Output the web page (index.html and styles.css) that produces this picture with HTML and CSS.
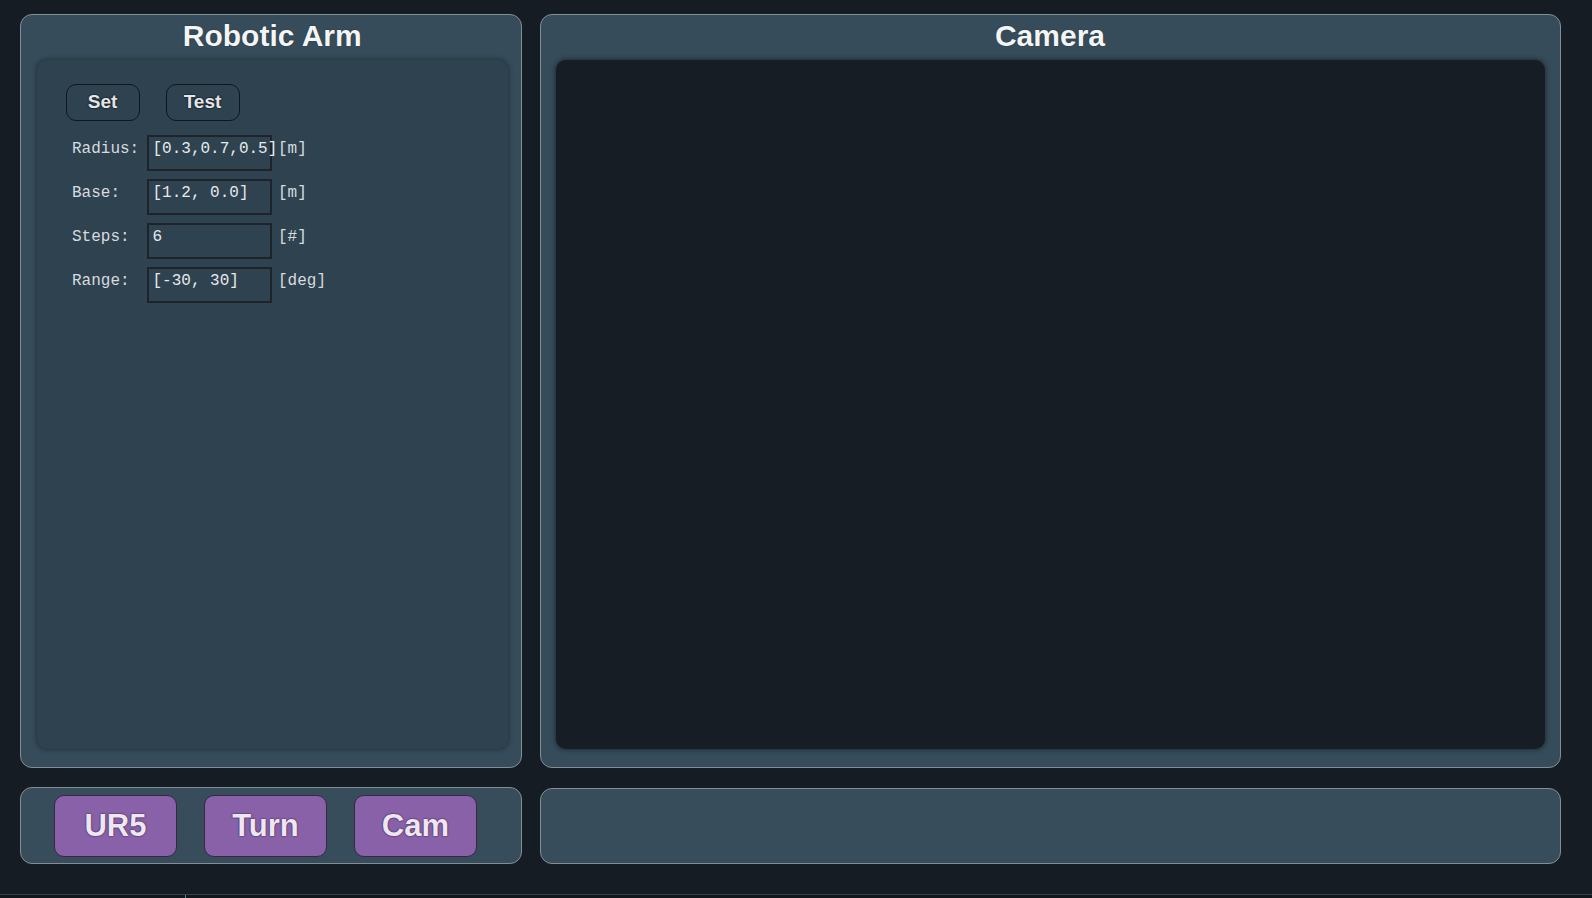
FILE: index.html
```html
<!DOCTYPE html>
<html lang="en">
<head>
<meta charset="utf-8">
<title>Robotic Arm</title>
<link rel="stylesheet" href="styles.css">
</head>
<body>
<div class="app">
  <section class="panel arm">
    <h2 class="title">Robotic Arm</h2>
    <div class="inner">
      <div class="btn-row">
        <button class="btn">Set</button>
        <button class="btn">Test</button>
      </div>
      <div class="fields">
        <div class="field"><span class="label">Radius:</span><span class="input">[0.3,0.7,0.5]</span><span class="unit">[m]</span></div>
        <div class="field"><span class="label">Base:</span><span class="input">[1.2, 0.0]</span><span class="unit">[m]</span></div>
        <div class="field"><span class="label">Steps:</span><span class="input">6</span><span class="unit">[#]</span></div>
        <div class="field"><span class="label">Range:</span><span class="input">[-30, 30]</span><span class="unit">[deg]</span></div>
      </div>
    </div>
  </section>
  <section class="panel cam">
    <h2 class="title">Camera</h2>
    <div class="screen"></div>
  </section>
  <section class="bar tabs">
    <button class="tab">UR5</button>
    <button class="tab">Turn</button>
    <button class="tab">Cam</button>
  </section>
  <section class="bar status"></section>
</div>
<footer class="footer"><span class="caret"></span></footer>
</body>
</html>
```
FILE: styles.css
```css
html, body {
  margin: 0;
  padding: 0;
  background: #161c23;
  height: 100%;
  overflow: hidden;
}

body {
  font-family: "Liberation Sans", Arial, sans-serif;
  color: #eef0f2;
}

.app {
  display: grid;
  grid-template-columns: 502px 1021px;
  grid-template-rows: 754px 77px;
  column-gap: 18px;
  row-gap: 19px;
  padding: 14px 31px 0 20px;
}

.panel {
  box-sizing: border-box;
  background: #364c5a;
  border: 1.5px solid #848d94;
  border-radius: 12px;
  display: flex;
  flex-direction: column;
}

.arm {
  padding: 0 13px 18px 15.5px;
}

.cam {
  padding: 0 15.5px 18px 14.5px;
}

.title {
  margin: 0;
  height: 44.5px;
  line-height: 42px;
  font-size: 30px;
  font-weight: bold;
  text-align: center;
  color: #f4f5f6;
  text-shadow: 0 0 1px rgba(10, 14, 18, 0.8);
}

.inner {
  flex: 1;
  background: #2f4250;
  border-radius: 10px;
  box-shadow: 0 0 4px 1px rgba(16, 22, 28, 0.45);
  padding: 24.5px 0 0 29px;
}

.btn-row {
  display: flex;
  gap: 26px;
}

.btn {
  box-sizing: border-box;
  width: 74px;
  height: 36.5px;
  margin: 0;
  padding: 0 0 1px;
  background: #2f4250;
  border: 1.5px solid #0f161d;
  border-radius: 10px;
  font-family: "Liberation Sans", Arial, sans-serif;
  font-size: 19px;
  font-weight: bold;
  color: #e4e6e8;
  text-shadow: 0 0 2px #0b1016, 0 0 1px #0b1016;
}

.fields {
  display: flex;
  flex-direction: column;
  gap: 7.5px;
  margin-top: 14px;
  padding-left: 6.5px;
  font-family: "Liberation Mono", "Courier New", monospace;
  font-size: 16px;
  color: #d6dbde;
}

.field {
  display: flex;
  align-items: flex-start;
  height: 36.5px;
}

.label {
  width: 75px;
  padding-top: 4px;
  line-height: 20px;
  white-space: pre;
}

.input {
  box-sizing: border-box;
  width: 124.5px;
  height: 36.5px;
  border: 2px solid #1d2329;
  padding: 2px 0 0 3.5px;
  line-height: 20px;
  white-space: nowrap;
  overflow: visible;
  color: #e6e9eb;
}

.unit {
  margin-left: 6.5px;
  padding-top: 4px;
  line-height: 20px;
}

.screen {
  flex: 1;
  background: #171d24;
  border-radius: 10px;
  box-shadow: 0 0 4px 1px rgba(14, 19, 24, 0.55);
}

.bar {
  box-sizing: border-box;
  background: #374d5b;
  border: 1.5px solid #848d94;
  border-radius: 12px;
}

.tabs {
  display: flex;
  align-items: flex-start;
  gap: 26.6px;
  padding: 7px 0 0 32.8px;
}

.status {
  margin-top: 1px;
}

.tab {
  box-sizing: border-box;
  width: 123.4px;
  height: 62px;
  margin: 0;
  padding: 0;
  background: #8961a9;
  border: 1.5px solid #35283f;
  border-radius: 10px;
  font-family: "Liberation Sans", Arial, sans-serif;
  font-size: 31px;
  font-weight: bold;
  color: #efe6f3;
  text-shadow: 0 0 2px #3a2848, 0 0 1px #3a2848;
}

.footer {
  margin-top: 30px;
  height: 3px;
  border-top: 1px solid #3a4148;
  background: #12171c;
  display: flex;
}

.caret {
  margin-left: 185px;
  width: 1px;
  height: 3px;
  background: #4f86a8;
}
```
